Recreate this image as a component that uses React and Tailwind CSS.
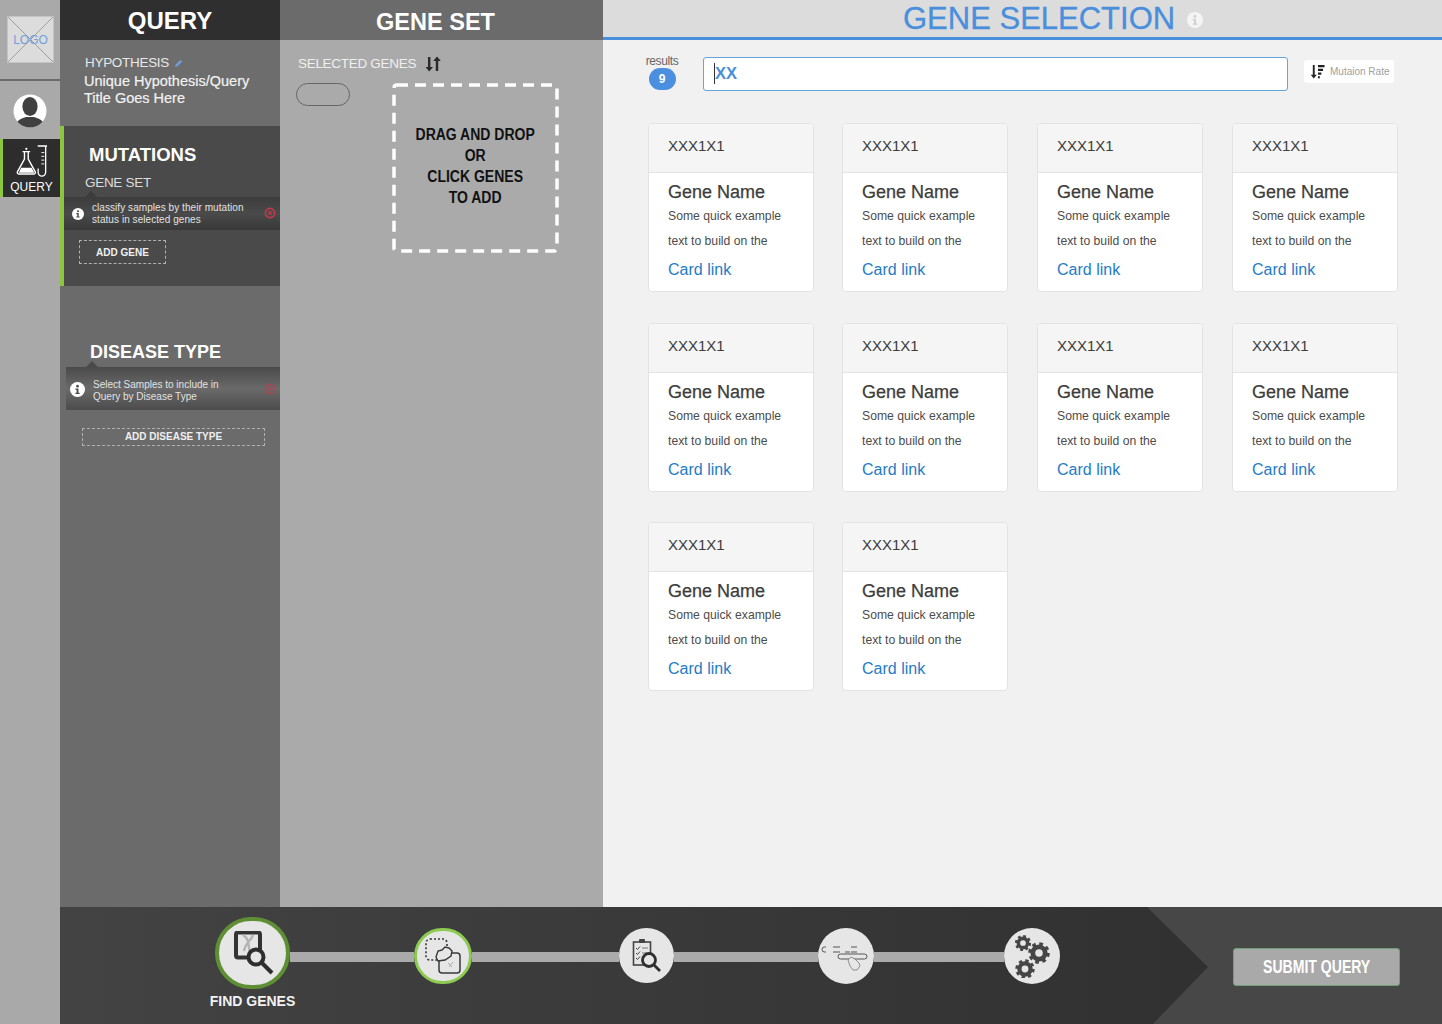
import React from 'react';

const CARDS = [0, 1, 2, 3, 4, 5, 6, 7, 8, 9];

const InfoDot = ({ className, dot = '#4a4a4a' }) => (
  <svg viewBox="0 0 16 16" className={className}>
    <circle cx="8" cy="8" r="8" fill="currentColor" />
    <circle cx="8" cy="4.4" r="1.4" fill={dot} />
    <path d="M5.8 6.8h3.2v4.6h1.2v1.4H5.8v-1.4H7V8.2H5.8z" fill={dot} />
  </svg>
);

const CloseDot = ({ className }) => (
  <svg viewBox="0 0 12 12" className={className}>
    <circle cx="6" cy="6" r="4.6" fill="none" stroke="#c23a4c" strokeWidth="1.6" />
    <path d="M4.2 4.2l3.6 3.6M7.8 4.2l-3.6 3.6" stroke="#c23a4c" strokeWidth="1.2" />
  </svg>
);

// ring plus a dashed outer stroke for the teeth (8 teeth)
const Gear = ({ cx, cy, r }) => (
  <g fill="none" stroke="#464646">
    <circle cx={cx} cy={cy} r={r * 0.62} strokeWidth={r * 0.48} />
    <circle
      cx={cx}
      cy={cy}
      r={r * 0.9}
      strokeWidth={r * 0.36}
      strokeDasharray={`${r * 0.36} ${r * 0.347}`}
    />
  </g>
);

const Logo = () => (
  <div className="relative mt-4 ml-[7px] h-[47px] w-[47px] bg-[#dcdcdc] border border-[#c4c4c4]">
    <svg viewBox="0 0 47 47" className="absolute inset-0 h-full w-full">
      <path d="M0 0L47 47M47 0L0 47" stroke="#9a9a9a" strokeWidth="1" />
    </svg>
    <div className="absolute inset-0 flex items-center justify-center text-[12px] text-[#6f9fdc]">LOGO</div>
  </div>
);

const Avatar = () => (
  <svg viewBox="0 0 34 34" className="ml-[13px] mt-[13px] h-[34px] w-[34px]">
    <circle cx="17" cy="17" r="16.5" fill="#fff" />
    <clipPath id="av">
      <circle cx="17" cy="17" r="16.5" />
    </clipPath>
    <g clipPath="url(#av)" fill="#404040">
      <ellipse cx="17" cy="12.5" rx="7.6" ry="9.5" />
      <path d="M2 34c0-7 5-9 11-11h8c6 2 11 4 11 11z" />
    </g>
  </svg>
);

const FlaskIcon = () => (
  <svg viewBox="0 0 34 36" className="h-[34px] w-[32px]" fill="none" stroke="#fff">
    <path d="M23 1h10M31.5 1v28a4 4 0 0 1-8 0v-4" strokeWidth="1.4" />
    <path d="M27 8h3M27 12h3M27 16h3M27 20h3" strokeWidth="1" />
    <path d="M7 7h8M9 7v8L1.5 28.5a1.5 1.5 0 0 0 1.3 2.2h16.4a1.5 1.5 0 0 0 1.3-2.2L13 15V7" strokeWidth="1.5" />
    <path d="M5.5 24h11l3 5.5H3z" fill="#fff" stroke="none" />
    <circle cx="11" cy="4" r="1.2" fill="#fff" stroke="none" />
  </svg>
);

const TooltipStrip = ({ className, arrowClass, children, gradient }) => (
  <div className={`relative flex items-center ${gradient} ${className}`}>
    <div className={`absolute -top-[6px] h-0 w-0 border-x-[6px] border-b-[6px] border-x-transparent ${arrowClass}`} />
    {children}
  </div>
);

const QueryPanel = () => (
  <div className="flex w-[220px] flex-col bg-[#6b6b6b] text-white">
    <div className="flex h-10 shrink-0 items-center justify-center bg-[#2f2f2f] pt-px text-2xl font-bold">QUERY</div>
    <div className="h-[86px] shrink-0 bg-[#6d6d6d] pl-[24px] pt-[15px]">
      <div className="flex items-center pl-px text-[13.5px] leading-4 tracking-[-0.3px] text-[#e8e8e8]">
        HYPOTHESIS
        <svg viewBox="0 0 10 10" className="ml-[5px] h-[9px] w-[9px]">
          <path d="M1 9l1-3 5-5 2 2-5 5z" fill="#6f9fdc" />
        </svg>
      </div>
      <div className="mt-[2px] text-[14.5px] font-medium leading-[17px] text-[#f2f2f2] [-webkit-text-stroke:0.2px_#f2f2f2]">
        Unique Hypothesis/Query
        <br />
        Title Goes Here
      </div>
    </div>
    <div className="h-40 shrink-0 border-l-4 border-[#8cc63f] bg-[#4a4a4a]">
      <div className="pl-[25px] pt-[17px] text-[18.5px] font-bold leading-6">MUTATIONS</div>
      <div className="pl-[21px] pt-[7px] text-[13.5px] leading-[18px] tracking-[-0.3px] text-[#dcdcdc]">GENE SET</div>
      <TooltipStrip
        className="mt-[5px] h-[33px]"
        gradient="bg-gradient-to-b from-[#3c3c3c] via-[#4a4a4a] to-[#383838]"
        arrowClass="left-[21px] border-b-[#3c3c3c]"
      >
        <InfoDot className="ml-2 h-3 w-3 shrink-0 text-white" />
        <div className="ml-2 whitespace-nowrap text-[10px] leading-3 tracking-[0.06px] text-[#e2e2e2]">
          classify samples by their mutation
          <br />
          status in selected genes
        </div>
        <CloseDot className="absolute right-[4px] top-[10px] h-3 w-3" />
      </TooltipStrip>
      <div className="ml-[15px] mt-[10px] flex h-6 w-[87px] items-center justify-center border border-dashed border-[#b0b0b0] text-[10px] font-bold text-[#efefef]">
        ADD GENE
      </div>
    </div>
    <div className="pl-[30px] pt-[54px] text-[18px] font-bold leading-6">DISEASE TYPE</div>
    <TooltipStrip
      className="ml-[6px] mt-[3px] h-[43px]"
      gradient="bg-gradient-to-b from-[#4a4a4a] via-[#6a6a6a] to-[#4c4c4c]"
      arrowClass="left-[20px] border-b-[#4a4a4a]"
    >
      <InfoDot className="ml-1 mt-[2px] h-[15px] w-[15px] shrink-0 text-white" />
      <div className="ml-2 mt-[4px] whitespace-nowrap text-[10px] leading-3 text-[#e2e2e2]">
        Select Samples to include in
        <br />
        Query by Disease Type
      </div>
      <CloseDot className="absolute right-[4px] top-[16px] h-3 w-3 opacity-70" />
    </TooltipStrip>
    <div className="ml-[22px] mt-[18px] flex h-[18px] w-[183px] items-center justify-center border border-dashed border-[#b0b0b0] pb-px text-[10px] font-bold text-[#efefef]">
      ADD DISEASE TYPE
    </div>
  </div>
);

const GeneSetPanel = () => (
  <div className="flex w-[323px] flex-col bg-[#aaaaaa]">
    <div className="flex h-10 shrink-0 items-center justify-center bg-[#6b6b6b] pr-[12px] pt-[5px] text-[23.5px] font-bold text-white">
      GENE SET
    </div>
    <div className="flex items-center pl-[18px] pt-[15px] text-[13.5px] leading-[18px] tracking-[-0.3px] text-[#efefef]">
      SELECTED GENES
      <svg viewBox="0 0 16 16" className="ml-[9px] h-4 w-4" fill="#2a2a2a">
        <path d="M3 1h2.4v10H8l-3.8 4.4L.6 11H3zM10.8 15V5H8.2L12 .6 15.8 5h-2.6v10z" />
      </svg>
    </div>
    <div className="flex items-start">
      <div className="ml-4 mt-[10px] h-[23px] w-[54px] rounded-full border border-[#666] bg-[#aaaaaa]" />
      <div className="relative ml-[42px] mt-[10px] flex h-[170px] w-[167px] items-center justify-center pb-[4px]">
        <svg className="absolute inset-0 h-full w-full" fill="none">
          <rect x="2" y="2" width="163" height="166" rx="3" stroke="#fff" strokeWidth="3.5" strokeDasharray="11 7" />
        </svg>
        <div className="scale-x-[0.875] text-center text-[16px] font-bold leading-[21px] text-[#111]">
          <div className="whitespace-nowrap">DRAG AND DROP</div>
          <div>OR</div>
          <div>CLICK GENES</div>
          <div>TO ADD</div>
        </div>
      </div>
    </div>
  </div>
);

const GeneCard = () => (
  <div className="h-[169px] w-[166px] overflow-hidden rounded-[4px] border border-[#e3e3e3] bg-white">
    <div className="flex h-[49px] items-center border-b border-[#e3e3e3] bg-[#f5f5f5] pb-[3px] pl-[19px] text-[15px] text-[#3c3c3c]">
      XXX1X1
    </div>
    <div className="pl-[19px] pt-[7px]">
      <div className="text-[18px] leading-[24px] text-[#3c3c3c] [-webkit-text-stroke:0.25px_#3c3c3c]">Gene Name</div>
      <div className="text-[12.2px] leading-[25px] text-[#4c4c4c]">
        Some quick example
        <br />
        text to build on the
      </div>
      <div className="pt-[4px] text-[16px] leading-[24px] text-[#1f7cc7]">Card link</div>
    </div>
  </div>
);

const SelectionPanel = () => (
  <div className="flex flex-1 flex-col bg-[#f1f1f1]">
    <div className="flex h-10 shrink-0 items-center border-b-[3px] border-[#4a8fdb] bg-[#dcdcdc] pl-[300px] pt-px">
      <div className="text-[31px] leading-9 text-[#4a8fdb] [-webkit-text-stroke:0.3px_#4a8fdb]">GENE SELECTION</div>
      <InfoDot className="ml-[12px] mt-[1px] h-4 w-4 text-[#f4f4f4]" dot="#d0d0d0" />
    </div>
    <div className="flex items-start pt-[14px]">
      <div className="ml-[42px] flex w-[34px] flex-col items-center">
        <div className="text-[12px] leading-[14px] tracking-[-0.4px] text-[#666]">results</div>
        <div className="flex h-[22px] w-[27px] items-center justify-center rounded-full bg-[#4a8fe0] text-[12px] font-bold text-white">
          9
        </div>
      </div>
      <div className="ml-[24px] mt-[3px] flex h-[34px] w-[585px] items-center rounded-[3px] border border-[#62a6db] bg-white pb-[2px] pl-[10px]">
        <div className="h-[21px] w-px bg-[#333]" />
        <div className="text-[16.5px] font-bold text-[#4a8fdb]">XX</div>
      </div>
      <div className="ml-4 mt-[6px] flex h-[23px] w-[90px] items-center rounded-[3px] bg-white pl-[6px]">
        <svg viewBox="0 0 16 16" className="h-[15px] w-[15px]" fill="#222">
          <path d="M3 1h2v10.5h2.2L4 15.4.8 11.5H3zM8.5 1h7v2.4h-7zM8.5 5h5.4v2.4H8.5zM8.5 9h3.6v2.4H8.5zM8.5 13h2v2.2h-2z" />
        </svg>
        <div className="ml-[5px] whitespace-nowrap text-[10px] text-[#a0a0a0]">Mutaion Rate</div>
      </div>
    </div>
    <div className="ml-[45px] mt-[32px] grid grid-cols-[194px_195px_195px_166px] gap-y-[30.5px]">
      {CARDS.map((c) => (
        <GeneCard key={c} />
      ))}
    </div>
  </div>
);

const Connector = ({ className }) => <div className={`mt-[35px] h-[10px] shrink-0 bg-[#aaaaaa] ${className}`} />;

const FindGenesIcon = () => (
  <svg viewBox="0 0 44 44" className="h-[44px] w-[44px]" fill="none">
    <rect x="5" y="1.5" width="24" height="25" rx="2" stroke="#333" strokeWidth="4" />
    <path d="M12 4c8 5 4 12 8 20M22 4c-2 6-8 8-9 16" stroke="#b4b4b4" strokeWidth="2.4" />
    <circle cx="25" cy="26" r="7.5" fill="#e6e6e6" stroke="#2e2e2e" strokeWidth="4" />
    <path d="M31 32l10 10" stroke="#2e2e2e" strokeWidth="4" />
  </svg>
);

const DragIcon = () => (
  <svg viewBox="0 0 38 38" className="h-[38px] w-[38px]" fill="none" stroke="#3a3a3a">
    <rect x="2" y="2" width="21" height="21" rx="4" strokeWidth="1.6" strokeDasharray="2 2" />
    <rect x="15" y="16" width="21" height="20" rx="3" strokeWidth="1.5" />
    <path d="M12 20l2-6 4-1 3-3 4 1 3 3-1 5-6 4-7 1z" fill="#e6e6e6" strokeWidth="1.4" />
    <path d="M24 26l4 4M29 25l-4 5" stroke="#aaa" strokeWidth="1" />
  </svg>
);

const ReviewIcon = () => (
  <svg viewBox="0 0 30 36" className="h-[36px] w-[30px]" fill="none">
    <rect x="1.5" y="4" width="17" height="23" stroke="#444" strokeWidth="1.6" />
    <rect x="7" y="1" width="6" height="4" rx="1" fill="#444" />
    <path d="M4 10l1.5 1.5L8 8.5M4 15l1.5 1.5L8 13.5M4 20l1.5 1.5L8 18.5" stroke="#444" strokeWidth="1" />
    <path d="M10 10h6M10 15h5" stroke="#777" strokeWidth="1" />
    <circle cx="17" cy="22" r="6.5" fill="#e6e6e6" stroke="#2e2e2e" strokeWidth="2.8" />
    <path d="M22 27l6 6" stroke="#2e2e2e" strokeWidth="2.8" />
  </svg>
);

const SliderIcon = () => (
  <svg viewBox="0 0 50 30" className="h-[30px] w-[50px]" fill="none" stroke="#555">
    <path d="M5 6H3.5a2 2 0 0 0 0 5H5" strokeWidth="1" />
    <path d="M12 6h7M12 11h7M24 11h5M30 6h6M30 11h6" strokeWidth="1" />
    <rect x="17" y="13" width="29" height="5" rx="2.5" strokeWidth="1" />
    <path d="M27 19l3-3 4 2 4 4 1 3-3 4h-4l-3-4z" fill="#e6e6e6" strokeWidth="0.8" stroke="#777" />
  </svg>
);

const GearsIcon = () => (
  <svg viewBox="0 0 36 44" className="h-[44px] w-[36px]">
    <Gear cx={9} cy={9} r={7.5} />
    <Gear cx={25} cy={19} r={10} />
    <Gear cx={11} cy={35} r={9} />
  </svg>
);

const StepCircle = ({ children, className }) => (
  <div className={`flex shrink-0 items-center justify-center rounded-full bg-[#e6e6e6] ${className}`}>{children}</div>
);

const Footer = () => (
  <div className="relative h-[117px] shrink-0 bg-[#474747]">
    <div className="absolute inset-0 bg-gradient-to-r from-[#434343] to-[#2d2d2d] [clip-path:polygon(0_0,1087px_0,1148px_60px,1093px_117px,0_117px)]" />
    <div className="relative flex items-start pl-[155px] pt-[10px]">
      <div className="flex w-[75px] shrink-0 flex-col items-center">
        <StepCircle className="h-[72px] w-[75px] border-[4px] border-[#5f8f35]">
          <FindGenesIcon />
        </StepCircle>
        <div className="mt-[2px] whitespace-nowrap text-[14px] font-bold leading-5 text-[#f2f2f2]">FIND GENES</div>
      </div>
      <Connector className="w-[124px]" />
      <StepCircle className="mt-[11px] h-[56px] w-[58px] border-[3px] border-[#8ccb50]">
        <DragIcon />
      </StepCircle>
      <Connector className="w-[147px]" />
      <StepCircle className="mt-[11px] h-[55px] w-[55px]">
        <ReviewIcon />
      </StepCircle>
      <Connector className="w-[144px]" />
      <StepCircle className="mt-[11px] h-[56px] w-[56px]">
        <SliderIcon />
      </StepCircle>
      <Connector className="w-[130px]" />
      <StepCircle className="mt-[11px] h-[56px] w-[56px]">
        <GearsIcon />
      </StepCircle>
      <div className="ml-[173px] mt-[31px] flex h-[38px] w-[167px] shrink-0 items-center justify-center rounded-[3px] border border-[#6f9f76] bg-[#a9a9a9] text-[18px] font-bold text-white">
        <div className="scale-x-[0.78] whitespace-nowrap">SUBMIT QUERY</div>
      </div>
    </div>
  </div>
);

const App = () => (
  <div className="flex h-[1024px] w-[1442px] overflow-hidden font-['Liberation_Sans',Arial,sans-serif]">
    <div className="w-[60px] shrink-0 bg-[#a9a9a9]">
      <Logo />
      <div className="mt-4 h-[2px] bg-[#6b6b6b]" />
      <Avatar />
      <div className="mt-[11px] flex h-[58px] flex-col items-center border-l-[3px] border-[#8cc63f] bg-[#2d2d2d] pt-[6px]">
        <FlaskIcon />
        <div className="mt-px text-[12px] leading-[14px] text-white">QUERY</div>
      </div>
    </div>
    <div className="flex flex-1 flex-col">
      <div className="flex h-[907px] shrink-0">
        <QueryPanel />
        <GeneSetPanel />
        <SelectionPanel />
      </div>
      <Footer />
    </div>
  </div>
);

export default App;
